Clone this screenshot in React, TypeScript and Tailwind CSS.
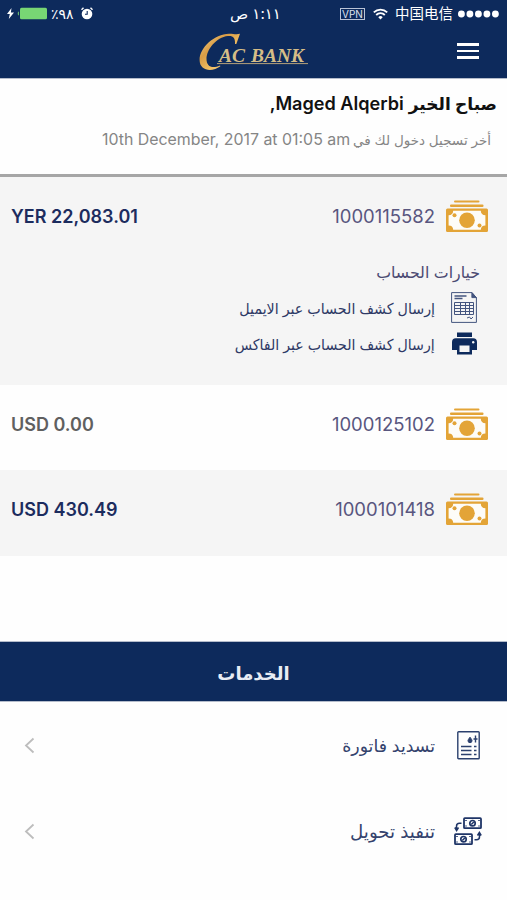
import React from 'react';

interface Account {
  number: string;
  balance: string;
  balanceClass: string;
}

const accounts: Account[] = [
  { number: '1000115582', balance: 'YER 22,083.01', balanceClass: 'text-[#1c2c5e]' },
  { number: '1000125102', balance: 'USD 0.00', balanceClass: 'text-[#606060]' },
  { number: '1000101418', balance: 'USD 430.49', balanceClass: 'text-[#1c2c5e]' },
];

const CashIcon = () => (
  <svg width="44" height="33" viewBox="0 0 44 33" fill="#e3a437">
    <rect x="9" y="0.5" width="25.5" height="2" rx="1" />
    <rect x="5" y="4.5" width="33.5" height="2.4" rx="1" />
    <rect x="1" y="8.5" width="42" height="23.5" rx="1.5" />
    <path d="M8.2 10.8h27.6a4.6 4.6 0 0 0 4.6 4.4v10.2a4.6 4.6 0 0 0-4.6 4.4H8.2a4.6 4.6 0 0 0-4.6-4.4V15.2a4.6 4.6 0 0 0 4.6-4.4z" fill="#fdfcf8" />
    <circle cx="22" cy="20.3" r="7.8" />
    <circle cx="9.5" cy="15.3" r="2" />
    <circle cx="34.5" cy="25.5" r="2" />
  </svg>
);

const StatementIcon = () => (
  <svg width="26" height="31" viewBox="0 0 26 31" fill="none" stroke="#44557f" strokeWidth="1">
    <path d="M.6.6h20.3l4.5 5v24.8H.6z" />
    <path d="M20.9.6v5h4.5z" fill="#44557f" />
    <path d="M3.5 4h12M3.5 6.5h8" strokeWidth="1.3" />
    <path d="M3.5 10.5h19v12h-19zM3.5 13.5h19M3.5 16.5h19M3.5 19.5h19M9.5 10.5v12M14.5 10.5v12M18.5 10.5v12" />
    <path d="M16 26l2.5-1 1.5 2 2-2" />
  </svg>
);

const PrinterIcon = () => (
  <svg width="25" height="23" viewBox="0 0 25 23">
    <path fill="#0d2a5c" d="M5 .5h15V5H5zM3.8 6.2h17.4A3.8 3.8 0 0 1 25 10v8h-5v4.5H5V18H0v-8a3.8 3.8 0 0 1 3.8-3.8z" />
    <path fill="#f5f5f5" d="M7.5 13.5h10v6.500h-10z" />
    <circle cx="21.2" cy="10.2" r="1.2" fill="#f5f5f5" />
  </svg>
);

const BillIcon = () => (
  <svg width="23" height="29" viewBox="0 0 23 29" fill="none" stroke="#2b406e">
    <rect x=".8" y=".8" width="21.4" height="27" rx=".8" strokeWidth="1.4" />
    <path d="M4 15.5h10.5M4 19.5h10.5M4 23.5h10.5" strokeWidth="1.6" />
    <path d="M17 15.5h2.5M17 19.5h2.5M17 23.5h2.5" strokeWidth="1.6" />
    <path d="M13 6.2c-1.5 2-2 2.7-2 3.5a2 2 0 0 0 4 0c0-.8-.5-1.5-2-3.5z" fill="#2b406e" />
    <path d="M18.5 4.5v7M16.500 8h4" strokeWidth="1.4" />
  </svg>
);

const TransferIcon = () => (
  <svg width="28" height="29" viewBox="0 0 28 29" fill="none" stroke="#1f3567">
    <rect x="10" y="1.2" width="17" height="10" rx=".8" strokeWidth="1.8" />
    <circle cx="18.5" cy="6.2" r="2.7" strokeWidth="1.7" />
    <path d="M17.3 7.5l2.5-2.6M12 3v1M25 3v1M12 8.5v1M25 8.5v1" strokeWidth="1.5" />
    <rect x="1" y="17.2" width="17" height="10" rx=".8" strokeWidth="1.8" />
    <circle cx="9.5" cy="22.2" r="2.7" strokeWidth="1.7" />
    <path d="M8.3 23.5l2.5-2.6M3 19v1M16 19v1M3 24.5v1M16 24.5v1" strokeWidth="1.5" />
    <path d="M7.5 6.2H5.5a3 3 0 0 0-3 3v3.5M.8 10.500l1.800 3 1.900-3" strokeWidth="1.5" />
    <path d="M20.5 22.7h2a3 3 0 0 0 3-3v-3.5M27.2 18.500l-1.800-3-1.900 3" strokeWidth="1.5" />
  </svg>
);

const ChevronLeft = () => (
  <svg width="11" height="17" viewBox="0 0 11 17" fill="none" stroke="#bdbdbd" strokeWidth="1.8">
    <path d="M9.5 1.5L2 8.5l7.5 7" />
  </svg>
);

const Logo = () => (
  <svg width="110" height="40" viewBox="0 0 110 40">
    <defs>
      <linearGradient id="gold" x1="0" y1="0" x2="1" y2="1">
        <stop offset="0" stopColor="#f6d68c" />
        <stop offset=".35" stopColor="#d99c45" />
        <stop offset=".6" stopColor="#f0bd62" />
        <stop offset="1" stopColor="#f6d891" />
      </linearGradient>
    </defs>
    <path
      fill="url(#gold)"
      d="M41 .8L37.3 11h-1.3C36.5 5 34 2.6 29 3.1 17 4.3 7.5 17 7.5 26c0 7.5 5.5 10 13.5 6.5l.4.8C13 39.5.6 38 .6 27 .6 14.5 15.5 1 30 .7c4-.1 7 1.1 11 .1z"
    />
    <text x="20" y="29" fill="#d5bd87" fontFamily="Liberation Serif, serif" fontStyle="italic" fontWeight="700" fontSize="18" textLength="26" lengthAdjust="spacingAndGlyphs">AC</text>
    <text x="52" y="29" fill="#d5bd87" fontFamily="Liberation Serif, serif" fontStyle="italic" fontWeight="700" fontSize="18" textLength="53" lengthAdjust="spacingAndGlyphs">BANK</text>
    <path d="M18 30.6h91" stroke="#b5a17a" strokeWidth="1" />
  </svg>
);

const StatusBar = () => (
  <div dir="ltr" className="flex h-[27px] items-center pl-[7px] pr-[8px] text-white">
    <div className="flex w-[223px] items-center">
      <svg width="7" height="11" viewBox="0 0 7 11" fill="#fff">
        <path d="M4.5 0L0 6h2.8L1.8 11 7 4.5H3.9z" />
      </svg>
      <svg className="ml-[3px]" width="30" height="13" viewBox="0 0 30 13" fill="#78d674">
        <rect x="3" y=".8" width="27" height="11.4" rx="1.5" />
        <path d="M1.8 4.5v4C.4 8.3.4 4.7 1.8 4.5z" />
      </svg>
      <span className="ml-[4px] text-[14px] leading-none">٪٩٨</span>
      <svg className="ml-[7px]" width="12" height="13" viewBox="0 0 12 13">
        <circle cx="6" cy="7" r="5.3" fill="#fff" />
        <path d="M.5 2.8L2.5.8M11.5 2.8L9.5.8" stroke="#fff" strokeWidth="1.4" />
        <path d="M6.2 4v3.2H4" fill="none" stroke="#0d2a5c" strokeWidth="1.1" />
      </svg>
    </div>
    <div dir="rtl" className="text-[15px] leading-none">١:١١ ص</div>
    <div className="ml-auto flex items-center">
      <span className="flex h-[12px] w-[25px] items-center justify-center border border-[#b9c3d6] text-[10px] leading-none text-[#dde3ee]">VPN</span>
      <svg className="ml-[8px]" width="15" height="12" viewBox="0 0 15 12" fill="none" stroke="#fff" strokeWidth="1.8">
        <path d="M.8 4.3a9.5 9.5 0 0 1 13.4 0M3.2 7a6 6 0 0 1 8.6 0" />
        <path d="M5.3 9.2a3.1 3.1 0 0 1 4.4 0L7.5 11.5z" fill="#fff" stroke="none" />
      </svg>
      <span className="ml-[7px] pt-[2px] text-[14.5px] leading-none">中国电信</span>
      <svg className="ml-[5px]" width="41" height="8" viewBox="0 0 42 8" fill="#fff">
        <circle cx="3.5" cy="4" r="3.5" />
        <circle cx="12.2" cy="4" r="3.5" />
        <circle cx="20.9" cy="4" r="3.5" />
        <circle cx="29.6" cy="4" r="3.5" />
        <circle cx="38.3" cy="4" r="3.5" />
      </svg>
    </div>
  </div>
);

const AccountRow: React.FC<{ account: Account }> = ({ account }) => (
  <div className="flex h-[85px] items-center pr-[18px] pl-[11px] pb-[6px]">
    <CashIcon />
    <span dir="ltr" className="mr-[10px] text-[18.5px] leading-none text-[#59567f]">{account.number}</span>
    <span dir="ltr" className={`mr-auto text-[18px] font-semibold leading-none ${account.balanceClass}`}>{account.balance}</span>
  </div>
);

const App: React.FC = () => {
  return (
    <div dir="rtl" className="h-[900px] w-[507px] overflow-hidden bg-[#fefefe] font-['Inter','DejaVu_Sans','Noto_Sans_CJK_SC',sans-serif]">
      <header className="h-[79px] border-b border-[#b4bccb] bg-[#0d2a5c]">
        <StatusBar />
        <div dir="ltr" className="flex h-[51px] items-start justify-between pr-[28px] pl-[199px]">
          <div className="pt-[6px]"><Logo /></div>
          <div className="flex flex-col gap-[4px] pt-[16px]">
            <div className="h-[2.5px] w-[22px] bg-white" />
            <div className="h-[2.5px] w-[22px] bg-white" />
            <div className="h-[2.5px] w-[22px] bg-white" />
          </div>
        </div>
      </header>

      <section className="h-[98px] border-b-[3px] border-[#a6a6a6]">
        <h1 className="flex items-baseline pt-[13px] pr-[10px] text-[17px] font-semibold leading-[22px] text-[#111]">
          <span>صباح الخير</span>
          <span className="mr-[5px] text-[18.1px]"><span dir="ltr">Maged Alqerbi</span>,</span>
        </h1>
        <p className="mt-[14px] flex items-baseline pr-[16px] leading-[22px] text-[#858585]">
          <span className="text-[13.5px]">أخر تسجيل دخول لك في</span>
          <span dir="ltr" className="mr-[3px] text-[15.9px]">10th December, 2017 at 01:05 am</span>
        </p>
      </section>

      <section className="h-[208px] bg-[#f5f5f5]">
        <AccountRow account={accounts[0]} />
        <div className="pr-[27px] pt-[1px] text-[15.8px] leading-[20px] text-[#4b4a72]">خيارات الحساب</div>
        <div className="mt-[9px] flex flex-col gap-[9px] pr-[30px] text-[15px] text-[#2f3a66]">
          <div className="flex h-[31px] items-center">
            <StatementIcon />
            <span className="mr-[16px] origin-right scale-x-[0.95] pt-[1px] leading-none">إرسال كشف الحساب عبر الايميل</span>
          </div>
          <div className="flex h-[23px] items-center">
            <PrinterIcon />
            <span className="mr-[17px] origin-right scale-x-[0.945] pt-[1px] leading-none">إرسال كشف الحساب عبر الفاكس</span>
          </div>
        </div>
      </section>

      <AccountRow account={accounts[1]} />
      <div className="h-[86px] bg-[#f5f5f5]">
        <AccountRow account={accounts[2]} />
      </div>

      <h2 className="mt-[85px] flex h-[61px] items-center justify-center border-y border-[#b4bccb] bg-[#0d2a5c] pt-[5px] text-[18px] font-bold leading-none text-[#e8ecf3]">
        الخدمات
      </h2>

      <div className="flex h-[86px] items-center pr-[27px] pl-[24px]">
        <BillIcon />
        <span className="mr-[22px] pt-[2px] text-[17.3px] leading-none text-[#34426d]">تسديد فاتورة</span>
        <span className="mr-auto"><ChevronLeft /></span>
      </div>
      <div className="flex h-[86px] items-center pr-[25px] pl-[24px]">
        <TransferIcon />
        <span className="mr-[19px] pt-[1px] text-[18.2px] leading-none text-[#34426d]">تنفيذ تحويل</span>
        <span className="mr-auto"><ChevronLeft /></span>
      </div>
    </div>
  );
};

export default App;
